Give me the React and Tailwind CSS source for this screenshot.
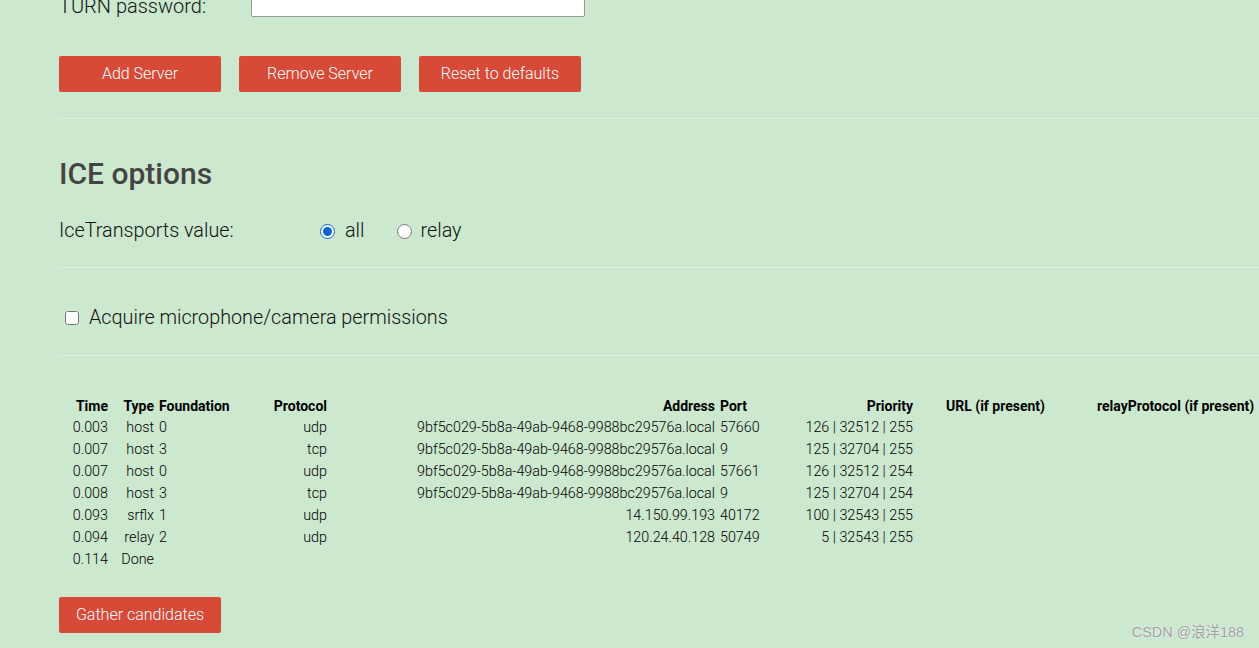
import React from 'react';

const rows = [
  ['0.003', 'host', '0', 'udp', '9bf5c029-5b8a-49ab-9468-9988bc29576a.local', '57660', '126 | 32512 | 255'],
  ['0.007', 'host', '3', 'tcp', '9bf5c029-5b8a-49ab-9468-9988bc29576a.local', '9', '125 | 32704 | 255'],
  ['0.007', 'host', '0', 'udp', '9bf5c029-5b8a-49ab-9468-9988bc29576a.local', '57661', '126 | 32512 | 254'],
  ['0.008', 'host', '3', 'tcp', '9bf5c029-5b8a-49ab-9468-9988bc29576a.local', '9', '125 | 32704 | 254'],
  ['0.093', 'srflx', '1', 'udp', '14.150.99.193', '40172', '100 | 32543 | 255'],
  ['0.094', 'relay', '2', 'udp', '120.24.40.128', '50749', '5 | 32543 | 255'],
];

const btn = 'h-[36px] w-[162px] rounded-[2px] bg-[#d84a38] text-white text-[16px] font-light';

export default function App() {
  return (
    <div className="relative h-[648px] w-full overflow-hidden bg-[#cce8cf] text-[#111] font-['Roboto','Liberation_Sans',sans-serif] font-light">
      <div className="pl-[59px] w-[1400px]">
        {/* TURN password row, mostly scrolled off */}
        <div className="flex items-end h-[30px] -mt-[13px]">
          <label className="w-[192px] text-[20px] leading-[22px]">TURN password:</label>
          <input type="password" className="w-[334px] h-[30px] bg-white border border-[#999] rounded-[2px]" />
        </div>

        <div className="flex gap-[18px] mt-[39px]">
          <button className={btn}>Add Server</button>
          <button className={btn}>Remove Server</button>
          <button className={btn}>Reset to defaults</button>
        </div>

        <hr className="mt-[26px] border-0 border-t border-[#e3ece3]" />

        <h2 className="mt-[37px] text-[30px] leading-[36px] font-medium text-[#444]">ICE options</h2>

        <div className="mt-[27px] flex items-center text-[19.8px] leading-[24px]">
          <span className="w-[261px]">IceTransports value:</span>
          <input type="radio" name="ice" defaultChecked className="w-[15px] h-[15px] m-0 accent-[#0b63d8]" />
          <span className="ml-[10px]">all</span>
          <input type="radio" name="ice" className="ml-[32px] w-[15px] h-[15px] m-0" />
          <span className="ml-[9px]">relay</span>
        </div>

        <hr className="mt-[24px] border-0 border-t border-[#e3ece3]" />

        <div className="mt-[38px] flex items-center text-[19.8px] leading-[24px]">
          <input type="checkbox" className="ml-[6px] w-[14px] h-[14px] m-0" />
          <span className="ml-[10px]">Acquire microphone/camera permissions</span>
        </div>

        <hr className="mt-[25px] border-0 border-t border-[#e3ece3]" />

        <table className="mt-[39px] table-fixed border-collapse text-[14.3px] text-black w-[1206px]">
          <colgroup>
            <col className="w-[51px]" />
            <col className="w-[46px]" />
            <col className="w-[106px]" />
            <col className="w-[67px]" />
            <col className="w-[388px]" />
            <col className="w-[60px]" />
            <col className="w-[138px]" />
            <col className="w-[165px]" />
            <col className="w-[185px]" />
          </colgroup>
          <thead>
            <tr className="h-[22px] text-[14px]">
              <th className="p-0 pr-[2px] text-right font-bold">Time</th>
              <th className="p-0 pr-[2px] text-right font-bold">Type</th>
              <th className="p-0 pl-[3px] text-left font-bold">Foundation</th>
              <th className="p-0 pr-[2px] text-right font-bold">Protocol</th>
              <th className="p-0 pr-[2px] text-right font-bold">Address</th>
              <th className="p-0 pl-[3px] text-left font-bold">Port</th>
              <th className="p-0 pr-[2px] text-right font-bold">Priority</th>
              <th className="p-0 pl-[31px] text-left font-bold whitespace-nowrap">URL (if present)</th>
              <th className="p-0 pl-[17px] text-left font-bold whitespace-nowrap">relayProtocol (if present)</th>
            </tr>
          </thead>
          <tbody>
            {rows.map((r, i) => (
              <tr key={i} className="h-[22px]">
                <td className="p-0 pr-[2px] text-right">{r[0]}</td>
                <td className="p-0 pr-[2px] text-right">{r[1]}</td>
                <td className="p-0 pl-[3px] text-left">{r[2]}</td>
                <td className="p-0 pr-[2px] text-right">{r[3]}</td>
                <td className="p-0 pr-[2px] text-right whitespace-nowrap">{r[4]}</td>
                <td className="p-0 pl-[3px] text-left">{r[5]}</td>
                <td className="p-0 pr-[2px] text-right whitespace-nowrap">{r[6]}</td>
                <td className="p-0"></td>
                <td className="p-0"></td>
              </tr>
            ))}
            <tr className="h-[22px]">
              <td className="p-0 pr-[2px] text-right">0.114</td>
              <td className="p-0 pr-[2px] text-right">Done</td>
              <td colSpan={7} className="p-0"></td>
            </tr>
          </tbody>
        </table>

        <button className={`${btn} mt-[26px]`}>Gather candidates</button>
      </div>

      <div className="absolute right-[15px] bottom-[4px] text-[14.4px] text-[#a0a0a0] font-normal font-['Liberation_Sans','Noto_Sans_CJK_SC',sans-serif] [text-shadow:0_0_2px_#fff]">
        CSDN @浪洋188
      </div>
    </div>
  );
}
